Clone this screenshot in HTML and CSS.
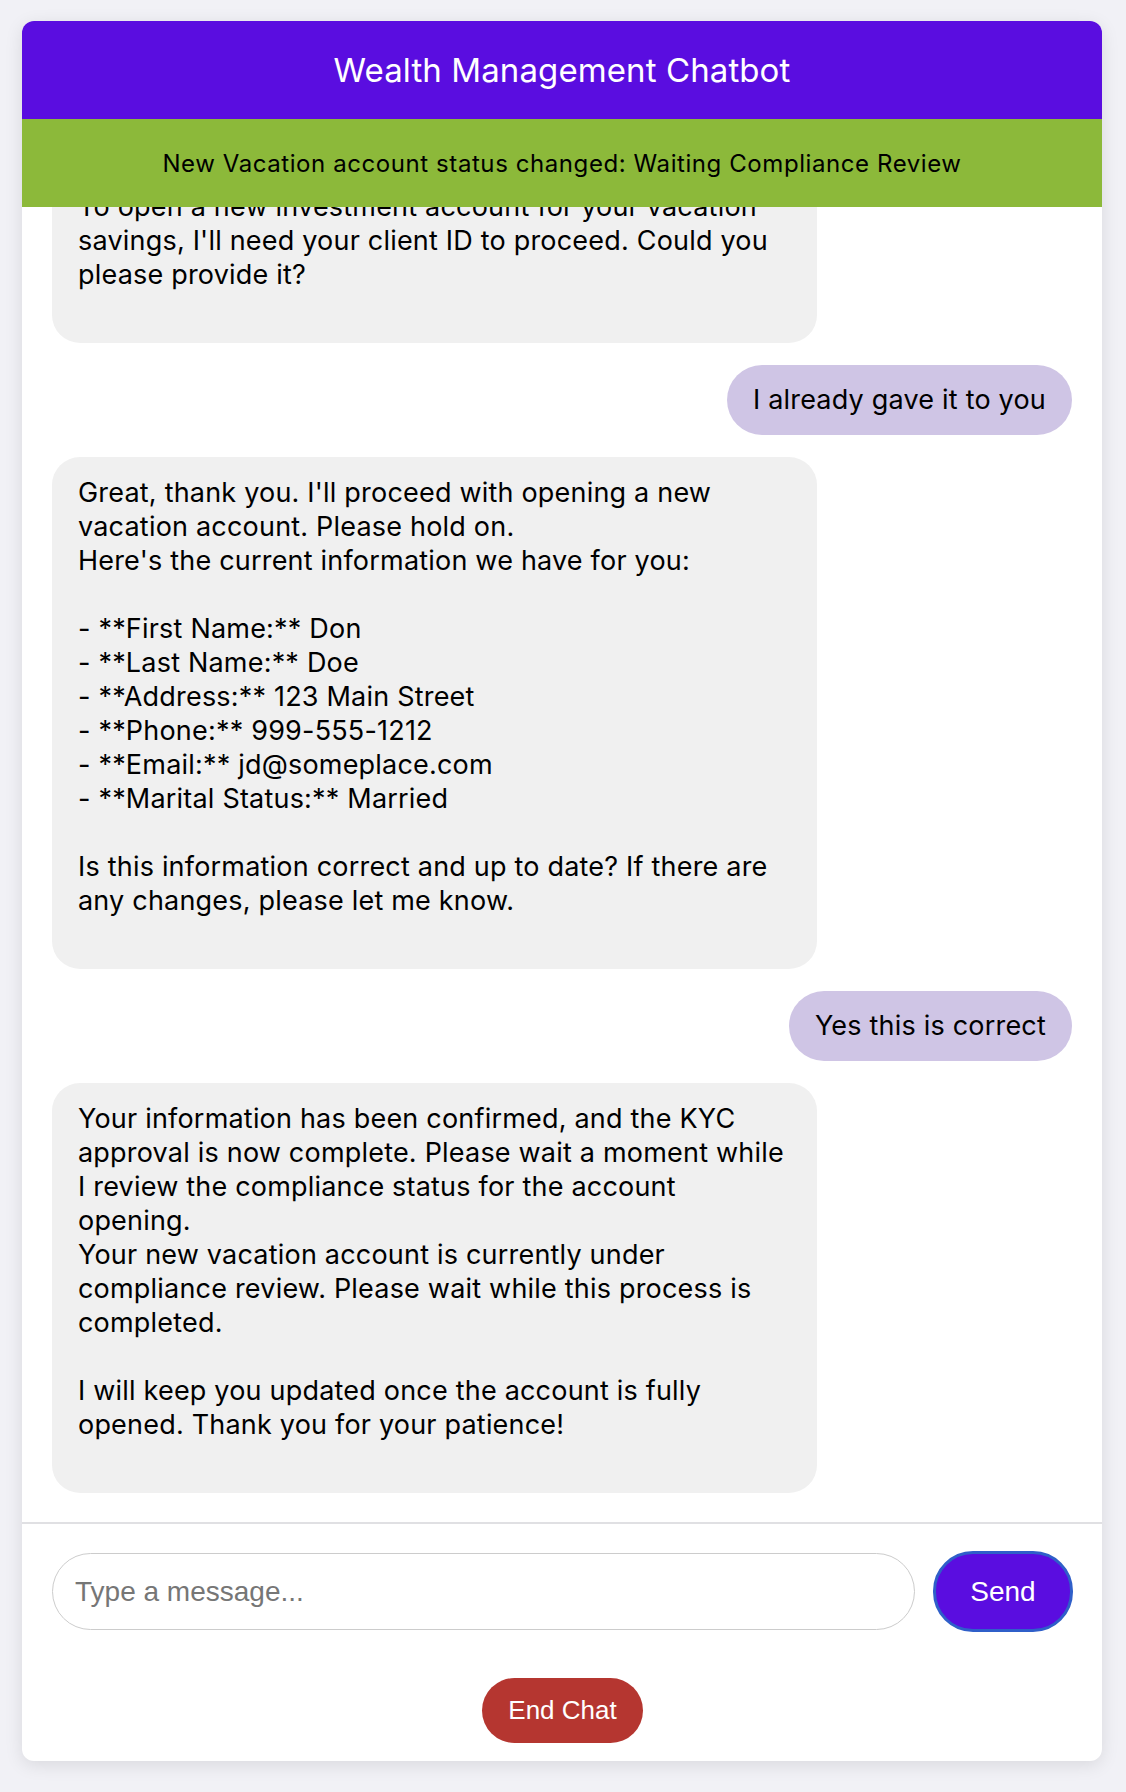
FILE: index.html
```html
<!DOCTYPE html>
<html lang="en">
<head>
<meta charset="utf-8">
<title>Wealth Management Chatbot</title>
<link rel="stylesheet" href="styles.css">
</head>
<body>
<div class="chat-card">
  <header class="chat-header">Wealth Management Chatbot</header>
  <div class="status-banner">New Vacation account status changed: Waiting Compliance Review</div>
  <div class="messages">
    <div class="messages-inner">
      <div class="msg bot">Thank you. Let me look into that for you.
To open a new investment account for your vacation savings, I'll need your client ID to proceed. Could you please provide it?</div>
      <div class="msg user">I already gave it to you</div>
      <div class="msg bot">Great, thank you. I'll proceed with opening a new vacation account. Please hold on.
Here's the current information we have for you:

- **First Name:** Don
- **Last Name:** Doe
- **Address:** 123 Main Street
- **Phone:** 999-555-1212
- **Email:** jd@someplace.com
- **Marital Status:** Married

Is this information correct and up to date? If there are any changes, please let me know.</div>
      <div class="msg user">Yes this is correct</div>
      <div class="msg bot">Your information has been confirmed, and the KYC approval is now complete. Please wait a moment while I review the compliance status for the account opening.
Your new vacation account is currently under compliance review. Please wait while this process is completed.

I will keep you updated once the account is fully opened. Thank you for your patience!</div>
    </div>
  </div>
  <div class="composer">
    <div class="input-row">
      <input class="msg-input" type="text" placeholder="Type a message...">
      <button class="send-btn" type="button">Send</button>
    </div>
    <div class="end-row">
      <button class="end-btn" type="button">End Chat</button>
    </div>
  </div>
</div>
</body>
</html>
```
FILE: styles.css
```css
* { box-sizing: border-box; }

html, body {
  margin: 0;
  height: 100%;
}

body {
  background: #f1f1f6;
  font-family: Inter, "Noto Sans", sans-serif;
  padding: 21px 24px 31px 22px;
}

.chat-card {
  height: 1740px;
  background: #ffffff;
  border-radius: 12px;
  box-shadow: 0 4px 18px rgba(0, 0, 0, 0.10);
  display: flex;
  flex-direction: column;
  overflow: hidden;
}

.chat-header {
  flex: 0 0 98px;
  background: #5a0de0;
  color: #ffffff;
  font-size: 33px;
  letter-spacing: 0.1px;
  display: flex;
  align-items: center;
  justify-content: center;
}

.status-banner {
  flex: 0 0 88px;
  background: #8cb93a;
  color: #000000;
  font-size: 24px;
  letter-spacing: 0.58px;
  display: flex;
  align-items: center;
  justify-content: center;
}

.messages {
  flex: 1 1 auto;
  min-height: 0;
  overflow-y: auto;
  scrollbar-width: none;
  display: flex;
  flex-direction: column-reverse;
  border-bottom: 2px solid #e0e0e3;
}

.messages-inner {
  padding: 0 30px 7px;
  display: flex;
  flex-direction: column;
}

.msg {
  font-size: 27px;
  line-height: 34px;
  letter-spacing: 0.2px;
  color: #000000;
  white-space: pre-wrap;
  margin-bottom: 22px;
}

.msg.bot {
  align-self: flex-start;
  max-width: 75%;
  background: #f0f0f0;
  border-radius: 28px;
  padding: 19px 26px 51px;
}

.msg.user {
  align-self: flex-end;
  background: #cfc5e5;
  border-radius: 35px;
  padding: 18px 26px;
}

.composer {
  padding: 27px 29px 18px 30px;
}

.input-row {
  display: flex;
  align-items: center;
  gap: 18px;
}

.msg-input {
  flex: 1 1 auto;
  height: 77px;
  border: 1px solid #cccccc;
  border-radius: 39px;
  padding: 0 22px;
  font-family: "Liberation Sans", Arial, sans-serif;
  font-size: 28px;
  color: #333333;
  background: #ffffff;
  outline: none;
}

.msg-input::placeholder {
  color: #767676;
}

.send-btn {
  flex: 0 0 140px;
  height: 81px;
  background: #5a0de0;
  color: #ffffff;
  border: 3px solid #2f5fc9;
  border-radius: 40px;
  font-family: "Liberation Sans", Arial, sans-serif;
  font-size: 28px;
  padding: 0;
}

.end-row {
  display: flex;
  justify-content: center;
  padding-top: 46px;
}

.end-btn {
  width: 161px;
  height: 65px;
  background: #b53630;
  color: #ffffff;
  border: none;
  border-radius: 33px;
  font-family: "Liberation Sans", Arial, sans-serif;
  font-size: 26px;
  padding: 0;
}
```
